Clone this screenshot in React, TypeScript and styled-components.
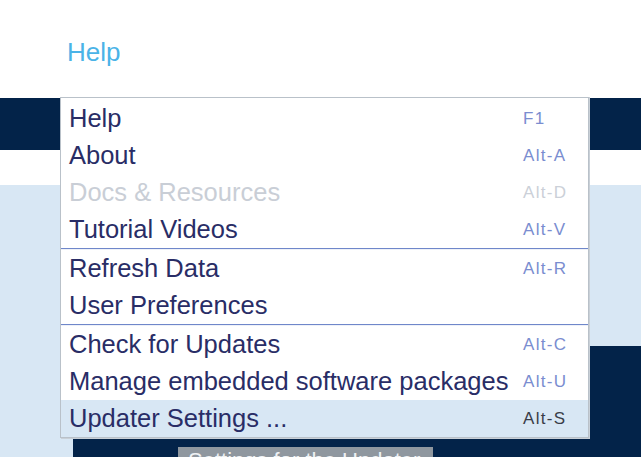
import styled, { createGlobalStyle } from "styled-components";

const GlobalStyle = createGlobalStyle`
  html, body {
    margin: 0;
    padding: 0;
    width: 641px;
    height: 457px;
    overflow: hidden;
    background: #ffffff;
    font-family: "Liberation Sans", Arial, sans-serif;
  }
`;

const Page = styled.div`
  position: relative;
  display: flex;
  flex-direction: column;
  width: 641px;
  height: 457px;
  overflow: hidden;
`;

const Header = styled.header`
  flex-shrink: 0;
  height: 98px;
  display: flex;
  align-items: center;
  padding-left: 67px;
  box-sizing: border-box;
`;

const Title = styled.span`
  font-size: 26px;
  color: #4ab3e7;
  margin-top: 7px;
`;

const NavBand = styled.div`
  flex-shrink: 0;
  height: 52px;
  background: #032349;
`;

const Gap = styled.div`
  flex-shrink: 0;
  height: 35px;
  background: #ffffff;
`;

const Content = styled.div`
  flex: 1;
  min-height: 0;
  background: #d8e7f4;
  padding: 161px 0 0 73px;
`;

const Panel = styled.div`
  height: 111px;
  background: #032349;
  padding: 101px 0 0 105px;
  box-sizing: border-box;
`;

const GreyButton = styled.div`
  width: 255px;
  height: 40px;
  background: #8f979f;
  color: #eef1f4;
  font-size: 22px;
  line-height: 26px;
  padding: 1px 0 0 10px;
  box-sizing: border-box;
  white-space: nowrap;
`;

/* dropdown lies over the page */
const Menu = styled.div`
  position: absolute;
  left: 60px;
  top: 97px;
  width: 527px;
  background: #ffffff;
  border: 1px solid #b9c1c9;
  box-shadow: 1px 0 0 #c9d0d7, 1px 1px 0 #c9d0d7;
  padding: 2px 0 0 0;
`;

const Row = styled.div<{ $active?: boolean }>`
  display: grid;
  grid-template-columns: 1fr 65px;
  height: 37px;
  align-items: center;
  padding-left: 8px;
  background: ${(p) => (p.$active ? "#d8e7f4" : "transparent")};
`;

const Label = styled.span<{ $disabled?: boolean }>`
  font-size: 25.5px;
  color: ${(p) => (p.$disabled ? "#c9ced6" : "#292d66")};
  white-space: nowrap;
`;

const Key = styled.span<{ $disabled?: boolean; $active?: boolean }>`
  font-size: 17px;
  letter-spacing: 1.3px;
  color: ${(p) =>
    p.$active ? "#3a3d48" : p.$disabled ? "#cbd0d8" : "#7a8dd0"};
`;

const Separator = styled.div`
  height: 1px;
  background: #6f87ca;
  border-bottom: 1px solid #eef1f8;
`;

type Item = { label: string; key?: string; disabled?: boolean; active?: boolean };

const groups: Item[][] = [
  [
    { label: "Help", key: "F1" },
    { label: "About", key: "Alt-A" },
    { label: "Docs & Resources", key: "Alt-D", disabled: true },
    { label: "Tutorial Videos", key: "Alt-V" },
  ],
  [
    { label: "Refresh Data", key: "Alt-R" },
    { label: "User Preferences" },
  ],
  [
    { label: "Check for Updates", key: "Alt-C" },
    { label: "Manage embedded software packages", key: "Alt-U" },
    { label: "Updater Settings ...", key: "Alt-S", active: true },
  ],
];

export default function App() {
  return (
    <>
      <GlobalStyle />
      <Page>
        <Header>
          <Title>Help</Title>
        </Header>
        <NavBand />
        <Gap />
        <Content>
          <Panel>
            <GreyButton>Settings for the Updater</GreyButton>
          </Panel>
        </Content>

        <Menu>
          {groups.map((group, gi) => (
            <div key={gi}>
              {gi > 0 && <Separator />}
              {group.map((item) => (
                <Row key={item.label} $active={item.active}>
                  <Label $disabled={item.disabled}>{item.label}</Label>
                  <Key $disabled={item.disabled} $active={item.active}>
                    {item.key}
                  </Key>
                </Row>
              ))}
            </div>
          ))}
        </Menu>
      </Page>
    </>
  );
}
